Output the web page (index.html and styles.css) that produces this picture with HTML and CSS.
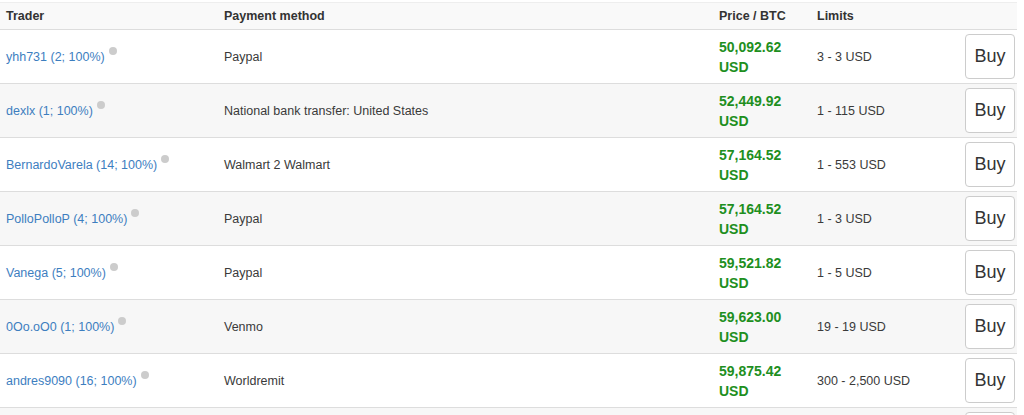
FILE: index.html
```html
<!DOCTYPE html>
<html>
<head>
<meta charset="utf-8">
<link rel="stylesheet" href="styles.css">
</head>
<body>
<table class="offers">
  <colgroup>
    <col class="c-trader"><col class="c-pay"><col class="c-price"><col class="c-limits"><col class="c-buy">
  </colgroup>
  <thead>
    <tr><th>Trader</th><th>Payment method</th><th>Price / BTC</th><th>Limits</th><th></th></tr>
  </thead>
  <tbody>
    <tr>
      <td><a class="trader" href="#">yhh731 (2; 100%)</a><span class="dot"></span></td>
      <td>Paypal</td>
      <td class="price">50,092.62<br>USD</td>
      <td>3 - 3 USD</td>
      <td><button class="buy">Buy</button></td>
    </tr>
    <tr>
      <td><a class="trader" href="#">dexlx (1; 100%)</a><span class="dot"></span></td>
      <td>National bank transfer: United States</td>
      <td class="price">52,449.92<br>USD</td>
      <td>1 - 115 USD</td>
      <td><button class="buy">Buy</button></td>
    </tr>
    <tr>
      <td><a class="trader" href="#">BernardoVarela (14; 100%)</a><span class="dot"></span></td>
      <td>Walmart 2 Walmart</td>
      <td class="price">57,164.52<br>USD</td>
      <td>1 - 553 USD</td>
      <td><button class="buy">Buy</button></td>
    </tr>
    <tr>
      <td><a class="trader" href="#">PolloPolloP (4; 100%)</a><span class="dot"></span></td>
      <td>Paypal</td>
      <td class="price">57,164.52<br>USD</td>
      <td>1 - 3 USD</td>
      <td><button class="buy">Buy</button></td>
    </tr>
    <tr>
      <td><a class="trader" href="#">Vanega (5; 100%)</a><span class="dot"></span></td>
      <td>Paypal</td>
      <td class="price">59,521.82<br>USD</td>
      <td>1 - 5 USD</td>
      <td><button class="buy">Buy</button></td>
    </tr>
    <tr>
      <td><a class="trader" href="#">0Oo.oO0 (1; 100%)</a><span class="dot"></span></td>
      <td>Venmo</td>
      <td class="price">59,623.00<br>USD</td>
      <td>19 - 19 USD</td>
      <td><button class="buy">Buy</button></td>
    </tr>
    <tr>
      <td><a class="trader" href="#">andres9090 (16; 100%)</a><span class="dot"></span></td>
      <td>Worldremit</td>
      <td class="price">59,875.42<br>USD</td>
      <td>300 - 2,500 USD</td>
      <td><button class="buy">Buy</button></td>
    </tr>
    <tr>
      <td></td>
      <td></td>
      <td></td>
      <td></td>
      <td><button class="buy" aria-label="Buy"></button></td>
    </tr>
  </tbody>
</table>
</body>
</html>
```

FILE: styles.css
```css
html, body {
  margin: 0;
  padding: 0;
  background: #fff;
}
body {
  font-family: "Liberation Sans", Arial, Helvetica, sans-serif;
  font-size: 12.5px;
  color: #3a3a3a;
  padding-top: 2px;
  overflow: hidden;
}
.offers {
  width: 1017px;
  border-collapse: collapse;
  table-layout: fixed;
}
.c-trader { width: 218px; }
.c-pay { width: 495px; }
.c-price { width: 98px; }
.c-limits { width: 148px; }
.c-buy { width: 58px; }

.offers th {
  text-align: left;
  font-weight: bold;
  line-height: 20px;
  padding: 3px 6px 3px 6px;
  background: #f9f9f9;
  border-top: 1px solid #eeeeee;
  border-bottom: 1px solid #dddddd;
  color: #333;
}
.offers td {
  padding: 4px 6px;
  line-height: 20px;
  vertical-align: middle;
  border-top: 1px solid #dddddd;
}
.offers tbody tr:nth-child(even) td {
  background: #f7f7f7;
}
.offers td:last-child {
  padding: 4px 2px 4px 6px;
}
.trader {
  color: #3d7ebf;
  text-decoration: none;
}
.dot {
  display: inline-block;
  width: 8px;
  height: 8px;
  border-radius: 50%;
  background: #cccccc;
  margin-left: 4px;
  vertical-align: 6px;
}
.price {
  color: #1e8f1e;
  font-weight: bold;
  font-size: 14px;
}
.buy {
  display: block;
  width: 50px;
  height: 45px;
  padding: 0;
  font-family: "Liberation Sans", Arial, Helvetica, sans-serif;
  font-size: 18px;
  color: #333;
  background: #fff;
  border: 1px solid #cccccc;
  border-radius: 4px;
}
```
